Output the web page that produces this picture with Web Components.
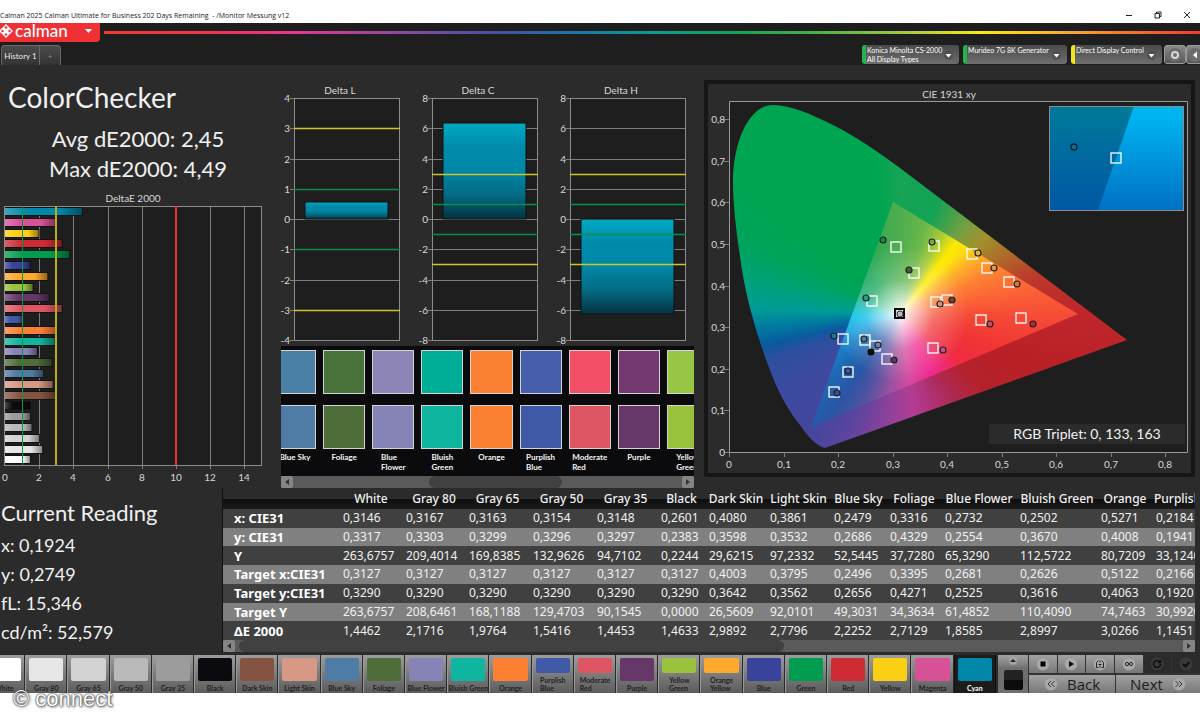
<!DOCTYPE html>
<html lang="en">
<head>
<meta charset="utf-8">
<meta name="viewport" content="width=device-width, initial-scale=1">
<title>Calman - ColorChecker</title>
<style>
  body {
    margin: 0;
    background: #fff;
    color: #f0f0f0;
    font-family: Lato, "Open Sans", sans-serif;
  }
</style>
</head>
<body>
<calman-app></calman-app>

<script>
// Patch colours in measuring order: name, colour, deltaE, measured colour
const PATCHES = [
  { name: 'White', color: '#ffffff', de: 1.45 },
  { name: 'Gray 80', color: '#e6e6e6', de: 2.17 },
  { name: 'Gray 65', color: '#d2d2d2', de: 1.98 },
  { name: 'Gray 50', color: '#b9b9b9', de: 1.54 },
  { name: 'Gray 35', color: '#9c9c9c', de: 1.45 },
  { name: 'Black', color: '#0b0b0f', de: 1.46 },
  { name: 'Dark Skin', color: '#855342', de: 2.99 },
  { name: 'Light Skin', color: '#d79885', de: 2.78 },
  { name: 'Blue Sky', color: '#4f7ca4', de: 2.23, measured: '#4b80a6' },
  { name: 'Foliage', color: '#4f6d3a', de: 2.71, measured: '#49723d' },
  { name: 'Blue Flower', color: '#8683b6', de: 1.86, measured: '#8d85b7' },
  { name: 'Bluish Green', color: '#10b59f', de: 2.9, measured: '#00ae98' },
  { name: 'Orange', color: '#fb8032', de: 3.03, measured: '#fb8031' },
  { name: 'Purplish Blue', color: '#405aa8', de: 1.0, measured: '#465eab' },
  { name: 'Moderate Red', color: '#de5563', de: 3.3, measured: '#f24e65' },
  { name: 'Purple', color: '#653869', de: 2.55, measured: '#72386f' },
  { name: 'Yellow Green', color: '#9bc23c', de: 1.6, measured: '#97c544' },
  { name: 'Orange Yellow', color: '#fda92d', de: 2.47 },
  { name: 'Blue', color: '#3a439b', de: 1.45 },
  { name: 'Green', color: '#009c4f', de: 3.75 },
  { name: 'Red', color: '#ce2b35', de: 3.3 },
  { name: 'Yellow', color: '#fbcf13', de: 1.95 },
  { name: 'Magenta', color: '#d75197', de: 3.0 },
  { name: 'Cyan', color: '#0087aa', de: 4.49 },
];

const TWO_LINES = ['Purplish Blue', 'Moderate Red', 'Yellow Green', 'Orange Yellow'];

function define(name, render) {
  customElements.define(name, class extends HTMLElement {
    connectedCallback() {
      if (this.shadowRoot) return;
      this.attachShadow({ mode: 'open' }).innerHTML = render(this);
    }
  });
}

const FONT = 'Lato, "Open Sans", sans-serif';
const range = (from, to, step) => {
  const out = [];
  for (let v = from; v <= to; v += step) out.push(v);
  return out;
};

// ---------- window frame ----------

define('window-title', () => `
  <style>
    :host { display: flex; align-items: center; justify-content: space-between; height: 23px; background: #fff; color: #222; }
    .name { font: 7px/14px "Open Sans", sans-serif; white-space: pre; padding-top: 9px; }
    .buttons { display: flex; padding-top: 7px; gap: 10px; padding-right: 4px; }
    button { border: 0; background: none; padding: 0; width: 19px; height: 14px; color: #222; }
    svg { display: block; margin: auto; }
  </style>
  <div class="name"><slot></slot></div>
  <div class="buttons">
    <button aria-label="Minimize"><svg width="8" height="8"><path d="M1 4.500H7" stroke="currentColor"/></svg></button>
    <button aria-label="Restore"><svg width="8" height="8" fill="none" stroke="currentColor"><path d="M1 2.500h4.500v4.500H1zM2.500 2.500V1h4.500v4.500H5.500"/></svg></button>
    <button aria-label="Close"><svg width="8" height="8"><path d="M1 1L7 7M7 1L1 7" stroke="currentColor"/></svg></button>
  </div>`);

define('device-button', (el) => `
  <style>
    :host { display: block; }
    button {
      display: flex; width: 100%; height: 19px; padding: 1px 6px 0 1px; align-items: flex-start; justify-content: space-between;
      border: 0; border-left: 4px solid ${el.getAttribute('state')}; border-radius: 3px;
      background: linear-gradient(#4a4a4a, #6e6e6e); color: #fff;
      font: 7px/9px ${FONT}; text-align: left; white-space: nowrap;
    }
    svg { margin-top: 5px; flex: none; }
  </style>
  <button aria-haspopup="listbox"><span><slot></slot></span>
    <svg width="9" height="9" aria-hidden="true"><circle cx="4.500" cy="4.500" r="4.500" fill="#444" opacity=".5"/><path d="M1.500 3h6l-3 3.500z" fill="#fff"/></svg>
  </button>`);

define('app-header', () => `
  <style>
    :host { display: block; background: #1e1e1e; }
    .brand-row { display: flex; align-items: flex-start; gap: 4px; }
    .brand {
      display: flex; align-items: center; flex: none; width: 100px; height: 19px; padding: 0 8px 3px 0; gap: 2px;
      border: 0; border-radius: 0 0 4px 0; background: #ef3136; color: #fff; font: 500 17px/16px ${FONT};
    }
    .brand .arrow { margin-left: auto; }
    .rainbow {
      flex: 1; height: 3px; margin-top: 8px;
      background: linear-gradient(90deg, #f03b30 0%, #ef3355 10%, #e8368f 17%, #8d4b9e 27%, #4550a3 36%, #1b76ab 43%, #0c9c8c 50%, #16a455 58%, #3fae4c 64%, #a4c83e 73%, #fbe911 80%, #fbb227 87%, #f3702d 94%, #ef3a34 100%);
    }
    .tab-row { display: flex; align-items: flex-end; height: 23px; justify-content: space-between; }
    .tabs, .devices { display: flex; }
    .tabs { padding-left: 1px; }
    .tabs button {
      height: 20px; padding: 0 4px; border: 1px solid #6a6a6a; border-bottom: 0; background: linear-gradient(#4c4c4c, #333);
      color: #eee; font: 8px/18px ${FONT}; white-space: nowrap;
    }
    .tabs button:first-child { border-radius: 4px 0 0 0; width: 39px; padding: 0; }
    .tabs button:last-child { border-radius: 0 4px 0 0; width: 21px; border-left: 0; color: #888; }
    .devices { gap: 4px; padding-bottom: 1px; }
    .d1 { width: 97px; } .d2 { width: 104px; } .d3 { width: 91px; }
    .tools { display: flex; margin-left: -2px; overflow: hidden; width: 36px; }
    .tools button { flex: none; width: 22px; height: 19px; padding: 0; border: 1px solid #999; border-radius: 3px; background: linear-gradient(#8a8a8a, #565656); }
    .tools svg { display: block; margin: auto; }
    .tools button:last-child svg { margin-left: 1px; }
  </style>
  <div class="brand-row">
    <button class="brand" aria-haspopup="menu">
      <svg width="13" height="14" viewBox="0 0 13 14" fill="none" stroke="#fff" stroke-width="1.400" aria-hidden="true">
        <path d="M6 1l2.500 2.500L6 6 3.500 3.500zM6 8l2.500 2.500L6 13 3.500 10.500zM2.500 4.500L5 7 2.500 9.500 0 7zM9.500 4.500L12 7 9.500 9.500 7 7z"/>
      </svg>
      <span>calman</span>
      <svg class="arrow" width="7" height="4" aria-hidden="true"><path d="M0 0h7l-3.500 4z" fill="#fff"/></svg>
    </button>
    <div class="rainbow"></div>
  </div>
  <div class="tab-row">
    <div class="tabs"><button>History 1</button><button aria-label="Add tab">+</button></div>
    <div class="devices">
      <device-button class="d1" state="#27b34b">Konica Minolta CS-2000<br>All Display Types</device-button>
      <device-button class="d2" state="#27b34b">Murideo 7G 8K Generator</device-button>
      <device-button class="d3" state="#f4e41c">Direct Display Control</device-button>
      <div class="tools">
        <button aria-label="Settings"><svg width="14" height="14"><circle cx="7" cy="7" r="7" fill="#6c6c6c"/><circle cx="7" cy="7" r="3" fill="none" stroke="#d8d8d8" stroke-width="2"/></svg></button>
        <button aria-label="Collapse"><svg width="14" height="14"><circle cx="7" cy="7" r="7" fill="#6c6c6c"/><path d="M9 3.500v7L5 7z" fill="#fff"/></svg></button>
      </div>
    </div>
  </div>`);

// ---------- shared scrollbar ----------

define('scroll-track', (el) => {
  const [before, thumb, after] = el.getAttribute('parts').split(' ');
  return `
  <style>
    :host { display: flex; height: 12px; background: #5a5a5a; }
    button { width: 12px; height: 12px; padding: 0; border: 0; border-radius: 2px; background: #858585; flex: none; }
    svg { display: block; margin: auto; }
    .before { flex: ${before}; } .after { flex: ${after}; }
    .thumb { flex: ${thumb}; border-radius: 6px; background: #414141; }
  </style>
  <button aria-label="Scroll left"><svg width="8" height="8"><path d="M6 1v6L2 4z" fill="#333"/></svg></button>
  <div class="before"></div><div class="thumb"></div><div class="after"></div>
  <button aria-label="Scroll right"><svg width="8" height="8"><path d="M2 1v6l4-3z" fill="#333"/></svg></button>`;
});

// ---------- charts ----------

const CHART_STYLE = `
  :host { display: block; min-width: 0; }
  svg { display: block; width: 100%; height: auto; }
  text { font-family: ${FONT}; font-size: 10px; fill: #d8d8d8; }
  .grid { stroke: #7d7d7d; stroke-width: 1; }
  .frame { fill: none; stroke: #8c8c8c; stroke-width: 1; }`;

define('error-chart', () => {
  const left = 5, top = 16, unit = 17.1, height = 259;
  const x = (v) => Math.round(left + v * unit);
  const grid = range(2, 14, 2).map((v) => `<path class="grid" d="M${x(v)}.500 ${top}v${height + 4}"/>`).join('');
  const bars = [...PATCHES].reverse().map((p, i) => {
    const y = Math.round(top + 2 + i * 10.8);
    return `<rect x="${left}" y="${y - 1}" width="${p.de * unit + 1}" height="9" fill="#121212"/>
      <rect x="${left}" y="${y}" width="${p.de * unit}" height="7" fill="${p.color}"/>
      <rect x="${left}" y="${y}" width="${p.de * unit}" height="7" fill="url(#shade)"/>`;
  }).join('');
  const labels = range(0, 14, 2).map((v) => `<text x="${x(v)}" y="291" text-anchor="middle">${v}</text>`).join('');
  return `
  <style>${CHART_STYLE}</style>
  <svg viewBox="0 0 276 298" role="img" aria-label="DeltaE 2000 per patch">
    <defs><linearGradient id="shade"><stop offset="0" stop-color="#fff" stop-opacity=".25"/><stop offset=".3" stop-color="#fff" stop-opacity="0"/><stop offset=".7" stop-color="#000" stop-opacity="0"/><stop offset="1" stop-color="#000" stop-opacity=".4"/></linearGradient></defs>
    <text x="133" y="12" text-anchor="middle">DeltaE 2000</text>
    <rect x="${left}" y="${top}" width="257" height="${height}" fill="#1e1e1e"/>
    ${grid}${bars}
    <rect class="frame" x="${left - 1}.500" y="${top}.500" width="257" height="${height}"/>
    <path d="M${x(1)}.500 ${top}v${height}" stroke="#0b9444" stroke-width="1"/>
    <path d="M${x(3)} ${top}v${height}" stroke="#b9ae13" stroke-width="2"/>
    <path d="M${x(10)} ${top}v${height}" stroke="#ee2e35" stroke-width="2"/>
    ${labels}
  </svg>`;
});

define('delta-chart', (el) => {
  const limit = +el.getAttribute('limit');
  const value = +el.getAttribute('value');
  const width = +el.getAttribute('plot');
  const left = 18, top = 16, height = 242;
  const y = (v) => Math.round(top + (limit - v) / (2 * limit) * height);
  const step = limit / 4;
  const ticks = range(-limit, limit, step);
  // tolerance lines replace the grid line where both fall on one value
  const isLimit = (v) => Math.abs(v) === 1 || Math.abs(v) === 3;
  const gridLine = (v) => `<path class="grid" d="M${left - 4} ${y(v)}.500h${isLimit(v) ? 4 : width + 4}"/>`;
  const line = (v, color, w) => `<path d="M${left} ${y(v)}.500h${width}" stroke="${color}" stroke-width="${w}"/>`;
  const barTop = y(Math.max(value, 0));
  const barHeight = Math.abs(y(value) - y(0));
  const bar = `x="${left + 11}" width="${width - 23}" y="${barTop}" height="${barHeight}"`;
  return `
  <style>${CHART_STYLE}</style>
  <svg viewBox="0 0 138 264" role="img" aria-label="${el.textContent}">
    <defs><linearGradient id="bar" x1="0" y1="0" x2="0" y2="1"><stop offset="0" stop-color="#00a9c2"/><stop offset=".25" stop-color="#008bab"/><stop offset=".5" stop-color="#0087a6"/><stop offset=".75" stop-color="#046b83"/><stop offset="1" stop-color="#03323f"/></linearGradient></defs>
    <text x="${left + width / 2 - 7}" y="12" text-anchor="middle">${el.textContent}</text>
    <rect x="${left}" y="${top}" width="${width}" height="${height}" fill="#1e1e1e"/>
    ${ticks.map((v) => `${gridLine(v)}<text x="${left - 4}" y="${y(v) + 4}" text-anchor="end">${v}</text>`).join('')}
    <rect class="frame" x="${left}.500" y="${top}.500" width="${width - 1}" height="${height}"/>
    <rect ${bar} fill="url(#bar)" stroke="#111" stroke-width="1"/>
    ${line(3, '#cfc62c', 1.5)}${line(1, '#0b8f48', 1.5)}${line(-1, '#0b8f48', 1.5)}${line(-3, '#cfc62c', 1.5)}
  </svg>`;
});

// Marker positions in plot coordinates: target square, measured dot
const MARKERS = [
  [167, 145, 154, 138, '#118a4c'], [205, 144, 203, 140, '#7cab38'], [185, 171, 180, 168, '#44603a'],
  [243, 152, 249, 151, '#e5bb20'], [258, 166, 265, 166, '#e39a2d'], [280, 180, 288, 182, '#e0762c'],
  [143, 199, 137, 196, '#15a68a'], [218, 198, 223, 198, '#6b4538'], [207, 200, 211, 202, '#cf9480'],
  [252, 218, 261, 222, '#cf4a58'], [292, 216, 304, 222, '#b02a35'], [114, 237, 105, 234, '#0c7e97'],
  [136, 238, 135, 237, '#4b7ca0'], [146, 244, 149, 243, '#7a78ad'], [158, 257, 165, 258, '#5d3464'],
  [204, 246, 214, 248, '#c94f94'], [119, 270, 119, 269, '#3b529c'], [105, 290, 108, 291, '#3c489a'],
];

define('cie-chart', () => {
  const mark = ([sx, sy, cx, cy, fill]) => `
    <rect x="${sx - 5}" y="${sy - 5}" width="10" height="10" fill="none" stroke="#fff" stroke-width="1.300"/>
    <circle cx="${cx}" cy="${cy}" r="3" fill="${fill}" stroke="#222" stroke-width="1.200"/>`;
  const num = (i) => i ? '0,' + i : '0';
  const xs = range(0, 8, 1).map((i) => {
    const x = Math.round(i * 54.500);
    return `<path class="grid" d="M${x}.500 350v5"/><text x="${x}" y="366" text-anchor="middle">${num(i)}</text>`;
  }).join('');
  const ys = range(0, 8, 1).map((i) => {
    const y = Math.round(350 - i * 41.600);
    return `<path class="grid" d="M-5 ${y}.500h5"/><text x="-4" y="${y + 4}" text-anchor="end">${num(i)}</text>`;
  }).join('');
  return `
  <style>
    ${CHART_STYLE}
    :host { border: 4px solid #161616; background: #2b2b2b; }
    .hues { width: 459px; height: 350px; }
    .outer {
      background: conic-gradient(from 0deg at 171px 212px, #16a455 0deg, #12a354 18deg, #72a043 36deg, #a0922c 48deg, #b0682a 62deg, #bb3b2a 74deg, #bf272c 88deg, #b82025 110deg,
        #b5222c 132deg, #ad2a58 150deg, #b33c94 172deg, #8e419a 187deg, #5f449f 202deg, #45469e 216deg, #3b4a9f 238deg, #2d4fa0 251deg, #0a5a9f 257deg,
        #007da0 265deg, #009c97 272deg, #00a17a 282deg, #00a35b 294deg, #00a551 310deg, #00a551 350deg, #16a455 360deg);
    }
    .inner {
      background:
        radial-gradient(circle at 171px 212px, #fff 0, rgba(255,255,255,.72) 12px, rgba(255,255,255,.26) 34px, rgba(255,255,255,0) 68px),
        conic-gradient(from 0deg at 171px 212px, #4fae4f 0deg, #6ab74a 16deg, #a9cb38 28deg, #ffe900 38deg, #fde010 44deg, #fdae2a 54deg, #fc8232 66deg, #fb6236 80deg, #f54936 92deg,
        #f03535 108deg, #ef2b42 128deg, #ef2a7a 143deg, #ee2a92 154deg, #d44a9e 172deg, #9652a0 188deg, #5353a2 202deg, #2a55a5 214deg, #1f66b2 226deg,
        #1a82c8 240deg, #12a5e0 252deg, #00bbea 264deg, #00bdd0 274deg, #10b49a 286deg, #12a968 300deg, #14a656 320deg, #3aaa50 345deg, #4fae4f 360deg);
    }
    .readout { font-size: 14px; fill: #f2f2f2; }
  </style>
  <svg viewBox="0 0 483 389" role="img" aria-label="CIE 1931 xy chromaticity diagram">
    <defs>
      <clipPath id="locus"><path d="M4 80C4 40 20 3 44 3C62 3 84 13 104 23C130 36 152 52 171 66L398 238L96 346C88 344 80 336 71 323C55 303 48 286 41 268C30 240 18 200 13 168C8 135 4 105 4 80Z"/></clipPath>
      <clipPath id="gamut"><path d="M164 100L349 212L82 325Z"/></clipPath>
      <linearGradient id="deep" x1="0" y1="0" x2="0" y2="1"><stop offset="0" stop-color="#007a9a"/><stop offset="1" stop-color="#0058a4"/></linearGradient>
      <linearGradient id="bright" x1="0" y1="0" x2="0" y2="1"><stop offset=".1" stop-color="#00b4f0"/><stop offset="1" stop-color="#0071c3"/></linearGradient>
    </defs>
    <text x="241" y="14" text-anchor="middle">CIE 1931 xy</text>
    <g transform="translate(21 18)">
      <rect width="459" height="350" fill="#1e1e1e"/>
      <g clip-path="url(#locus)"><foreignObject width="459" height="350"><div class="hues outer"></div></foreignObject></g>
      <g clip-path="url(#gamut)"><foreignObject width="459" height="350"><div class="hues inner"></div></foreignObject></g>
      <path d="M.500 350.500V-.500H458.500V350.500Z" fill="none" stroke="#9a9a9a"/>
      ${xs}${ys}
      ${MARKERS.map(mark).join('')}
      <circle cx="142" cy="250" r="3.500" fill="#0a0a0a"/>
      <rect x="166" y="207" width="9" height="9" fill="#ddd" stroke="#0a0a0a" stroke-width="2"/>
      <circle cx="171" cy="212" r="3" fill="#bbb" stroke="#333"/>
      <rect x="320" y="4" width="134" height="104" fill="url(#deep)"/>
      <path d="M405 4H454V108H369Z" fill="url(#bright)"/>
      <rect x="320.500" y="4.500" width="134" height="104" fill="none" stroke="#8d8d8d"/>
      <circle cx="345" cy="45" r="3" fill="#0c6f97" stroke="#10202a" stroke-width="1.300"/>
      <rect x="382" y="51" width="10" height="10" fill="none" stroke="#fff" stroke-width="1.300"/>
      <rect x="260" y="322" width="196" height="20" fill="#2b2b2b"/>
      <text class="readout" x="358" y="337" text-anchor="middle">RGB Triplet: 0, 133, 163</text>
    </g>
  </svg>`;
});

define('swatch-strip', () => `
  <style>
    :host { display: block; background: #0b0b0e; overflow: hidden; }
    .row { display: flex; gap: 7px; margin: 0 -15px 0 -7px; padding-top: 4px; }
    .item { flex: 1; min-width: 0; text-align: center; }
    .chip { height: 42px; border: 1px solid #d4d4d4; margin-bottom: 11px; }
    .chip + .chip { margin-bottom: 3px; }
    .label { height: 24px; font: bold 8px/10px ${FONT}; color: #f4f4f4; }
    .label span { display: inline-block; text-align: left; }
  </style>
  <div class="row">
    ${PATCHES.slice(8, 17).map((p) => `<div class="item">
      <div class="chip" style="background:${p.measured}"></div><div class="chip" style="background:${p.color}"></div>
      <div class="label"><span>${p.name === 'Blue Sky' ? p.name : p.name.replace(' ', '<br>')}</span></div></div>`).join('')}
  </div>
  <scroll-track parts="136 133 120"></scroll-track>`);

// ---------- readings ----------

define('summary-panel', () => `
  <style>
    :host { display: block; padding-top: 11px; }
    h1 { margin: 0 0 6px 8px; font-weight: 400; font-size: 28px; line-height: 42px; }
    .figure { text-align: center; font-size: 22px; line-height: 30px; }
    error-chart { margin-top: 6px; }
  </style>
  <h1>ColorChecker</h1>
  <div class="figure">Avg dE2000: 2,45</div>
  <div class="figure">Max dE2000: 4,49</div>
  <error-chart></error-chart>`);

define('reading-panel', () => `
  <style>
    :host { display: block; padding: 8px 0 0 1px; box-sizing: border-box; }
    h2 { margin: 0 0 1px; font-weight: 400; font-size: 22px; line-height: 34px; }
    div { font-size: 18px; line-height: 29px; }
  </style>
  <h2>Current Reading</h2>
  <div>x: 0,1924</div><div>y: 0,2749</div><div>fL: 15,346</div><div>cd/m²: 52,579</div>`);

const COLUMN_WIDTHS = [115, 63, 63, 64, 64, 64, 48, 61, 64, 56, 55, 75, 81, 55, 75];
const READINGS = [
  ['x: CIE31', '0,3146', '0,3167', '0,3163', '0,3154', '0,3148', '0,2601', '0,4080', '0,3861', '0,2479', '0,3316', '0,2732', '0,2502', '0,5271', '0,2184'],
  ['y: CIE31', '0,3317', '0,3303', '0,3299', '0,3296', '0,3297', '0,2383', '0,3598', '0,3532', '0,2686', '0,4329', '0,2554', '0,3670', '0,4008', '0,1941'],
  ['Y', '263,6757', '209,4014', '169,8385', '132,9626', '94,7102', '0,2244', '29,6215', '97,2332', '52,5445', '37,7280', '65,3290', '112,5722', '80,7209', '33,1240'],
  ['Target x:CIE31', '0,3127', '0,3127', '0,3127', '0,3127', '0,3127', '0,3127', '0,4003', '0,3795', '0,2496', '0,3395', '0,2681', '0,2626', '0,5122', '0,2166'],
  ['Target y:CIE31', '0,3290', '0,3290', '0,3290', '0,3290', '0,3290', '0,3290', '0,3642', '0,3562', '0,2656', '0,4271', '0,2525', '0,3616', '0,4063', '0,1920'],
  ['Target Y', '263,6757', '208,6461', '168,1188', '129,4703', '90,1545', '0,0000', '26,5609', '92,0101', '49,3031', '34,3634', '61,4852', '110,4090', '74,7463', '30,9920'],
  ['ΔE 2000', '1,4462', '2,1716', '1,9764', '1,5416', '1,4453', '1,4633', '2,9892', '2,7796', '2,2252', '2,7129', '1,8585', '2,8997', '3,0266', '1,1451'],
];

define('reading-table', () => `
  <style>
    :host { display: block; min-width: 0; border-left: 1px solid #111; }
    .view { overflow: hidden; }
    table { width: 1003px; height: 152px; table-layout: fixed; border-collapse: collapse; font: 12px/16px "Noto Sans", "Open Sans", sans-serif; color: #f0f0f0; }
    th, td { padding: 0 0 0 5px; text-align: left; white-space: nowrap; }
    thead th { padding: 1px 0 0 3px; height: 20px; text-align: center; font-weight: 500; }
    thead tr { background: linear-gradient(#2b2b2b 50%, #0d0d0d 50%, #1c1c1c); }
    tbody th { padding-left: 11px; font-weight: 700; font-size: 13px; color: #fff; }
    tbody tr { background: #404040; }
    tbody tr:nth-child(even) { background: #808080; }
  </style>
  <div class="view"><table>
    <colgroup>${COLUMN_WIDTHS.map((w) => `<col style="width:${w}px">`).join('')}</colgroup>
    <thead><tr><td></td>${PATCHES.slice(0, 14).map((p) => `<th scope="col">${p.name}</th>`).join('')}</tr></thead>
    <tbody>${READINGS.map(([head, ...cells]) => `<tr><th scope="row">${head}</th>${cells.map((c) => `<td>${c}</td>`).join('')}</tr>`).join('')}</tbody>
  </table></div>
  <scroll-track parts="4 543 397"></scroll-track>`);

// ---------- bottom bar ----------

define('patch-button', (el) => `
  <style>
    :host { display: block; flex: 1; min-width: 0; }
    button {
      display: flex; flex-direction: column; align-items: center; width: 100%; height: 38px; padding: 3px 3px 0;
      border: 0; border-right: 1px solid #2a2a2a; border-left: 1px solid #999; overflow: hidden;
      background: linear-gradient(#9d9d9d, #7c7c7c 50%, #5c5c5c); color: #222; font: 7px/8px ${FONT}; font-weight: 700;
    }
    :host([active]) button { background: #1c1c1c; border-color: #111; color: #fff; }
    .chip { width: 100%; flex: 1; min-height: 0; border-radius: 2px; background: ${el.getAttribute('color')}; margin-bottom: 3px; }
    .label { white-space: nowrap; text-align: left; padding-bottom: 1px; }
  </style>
  <button><span class="chip"></span><span class="label"><slot></slot></span></button>`);

const DISC = '<circle cx="7" cy="7" r="6.500" fill="#a9a9a9" stroke="#8a8a8a" stroke-width=".5"/>';

define('transport-panel', () => `
  <style>
    :host { display: grid; grid-template-columns: 30px 1fr; gap: 1px; background: #333; }
    button { border: 0; padding: 0; background: linear-gradient(#a2a2a2, #777); color: #1c1c1c; }
    svg { display: block; margin: auto; }
    .side { display: flex; flex-direction: column; background: #6f6f6f; align-items: center; }
    .side .up { width: 100%; height: 12px; }
    .side .stop { width: 19px; height: 20px; margin-top: 3px; border-radius: 2px; background: linear-gradient(#222 50%, #0c0c0c 50%); }
    .main { display: grid; grid-template-rows: 18px 18px; gap: 2px; }
    .icons { display: grid; grid-template-columns: repeat(6, 1fr); gap: 1px; }
    .icons .off { background: #2b2b2b; }
    .nav { display: grid; grid-template-columns: 86fr 84fr; gap: 1px; }
    .nav button { display: flex; align-items: center; justify-content: center; gap: 9px; font: 15px/18px "Open Sans", sans-serif; }
    .nav svg { margin: 0; }
  </style>
  <div class="side">
    <button class="up" aria-label="Expand"><svg width="10" height="8"><circle cx="5" cy="4" r="4" fill="#a4a4a4"/><path d="M2 5l3-3 3 3z" fill="#222"/></svg></button>
    <button class="stop" aria-label="Preview"></button>
  </div>
  <div class="main">
    <div class="icons">
      <button aria-label="Stop"><svg width="14" height="14">${DISC}<path d="M4.500 4.500h5v5h-5z"/></svg></button>
      <button aria-label="Play"><svg width="14" height="14">${DISC}<path d="M5 4v6l5-3z"/></svg></button>
      <button aria-label="Step"><svg width="14" height="14" fill="none" stroke="#222">${DISC}<path d="M5.500 10.500H3.500v-5l2-2M8.500 10.500h2v-5l-2-2M7 3.500v2M7 8.500v2M5.500 7.500h3"/></svg></button>
      <button aria-label="Continuous"><svg width="14" height="14" fill="none" stroke="#222">${DISC}<circle cx="5" cy="7" r="1.600"/><circle cx="9" cy="7" r="1.600"/></svg></button>
      <button class="off" aria-label="Refresh"><svg width="14" height="14" fill="none" stroke="#0e0e0e" stroke-width="1.500"><circle cx="7" cy="7" r="6.500" fill="#3a3a3a" stroke="none"/><path d="M9.500 4.500A3.500 3.500 0 1 0 10.500 7M10.500 3v2.500H8"/></svg></button>
      <button class="off" aria-label="Accept"><svg width="14" height="14" fill="none" stroke="#0e0e0e" stroke-width="2"><circle cx="7" cy="7" r="6.500" fill="#3a3a3a" stroke="none"/><path d="M4 7l2.500 2.500L10.500 5"/></svg></button>
    </div>
    <div class="nav">
      <button><svg width="14" height="14" fill="none" stroke="#333">${DISC}<path d="M7 4L4 7l3 3M10.500 4l-3 3 3 3"/></svg>Back</button>
      <button>Next<svg width="14" height="14" fill="none" stroke="#333">${DISC}<path d="M3.500 4l3 3-3 3M7 4l3 3-3 3"/></svg></button>
    </div>
  </div>`);

define('patch-bar', () => `
  <style>
    :host { display: grid; grid-template-columns: minmax(0, 1fr) 202px; gap: 2px; background: #2b2b2b; }
    .view { overflow: hidden; }
    .patches { display: flex; margin-left: -17px; }
  </style>
  <div class="view"><div class="patches">
    ${PATCHES.map((p) => `<patch-button color="${p.color}"${p.name === 'Cyan' ? ' active' : ''}>${TWO_LINES.includes(p.name) ? p.name.replace(' ', '<br>') : p.name}</patch-button>`).join('')}
  </div></div>
  <transport-panel></transport-panel>`);

define('calman-app', () => `
  <style>
    :host { display: block; }
    .work { background: #2b2b2b; padding-bottom: 3px; }
    .top { display: grid; grid-template-columns: 276fr 420fr 504fr; align-items: start; }
    .top > * { min-width: 0; }
    .deltas { display: grid; grid-template-columns: repeat(3, 1fr); padding: 17px 6px 0 0; }
    swatch-strip { margin: 0 2px 0 5px; }
    cie-chart { margin: 15px 5px 0 8px; }
    .bottom { display: grid; grid-template-columns: 222px minmax(0, 1fr); padding-right: 5px; }
    footer { position: relative; height: 27px; background: #fff; }
    /* credit line lies over the bar's lower edge */
    .credit {
      position: absolute; left: 13px; top: -7px; z-index: 1;
      font: 22px/25px "Liberation Sans", sans-serif; color: #fff;
      text-shadow: 0 0 1px #333, 0 0 2px #444, 1px 1px 3px #555;
    }
  </style>
  <window-title>Calman 2025 Calman Ultimate for Business 202 Days Remaining  - /Monitor Messung v12</window-title>
  <app-header></app-header>
  <main class="work">
    <div class="top">
      <summary-panel></summary-panel>
      <section>
        <div class="deltas">
          <delta-chart limit="4" value="0.57" plot="106">Delta L</delta-chart>
          <delta-chart limit="8" value="6.35" plot="106">Delta C</delta-chart>
          <delta-chart limit="8" value="-6.3" plot="116">Delta H</delta-chart>
        </div>
        <swatch-strip></swatch-strip>
      </section>
      <cie-chart></cie-chart>
    </div>
    <div class="bottom">
      <reading-panel></reading-panel>
      <reading-table></reading-table>
    </div>
  </main>
  <patch-bar></patch-bar>
  <footer><div class="credit">© connect</div></footer>`);
</script>
</body>
</html>
